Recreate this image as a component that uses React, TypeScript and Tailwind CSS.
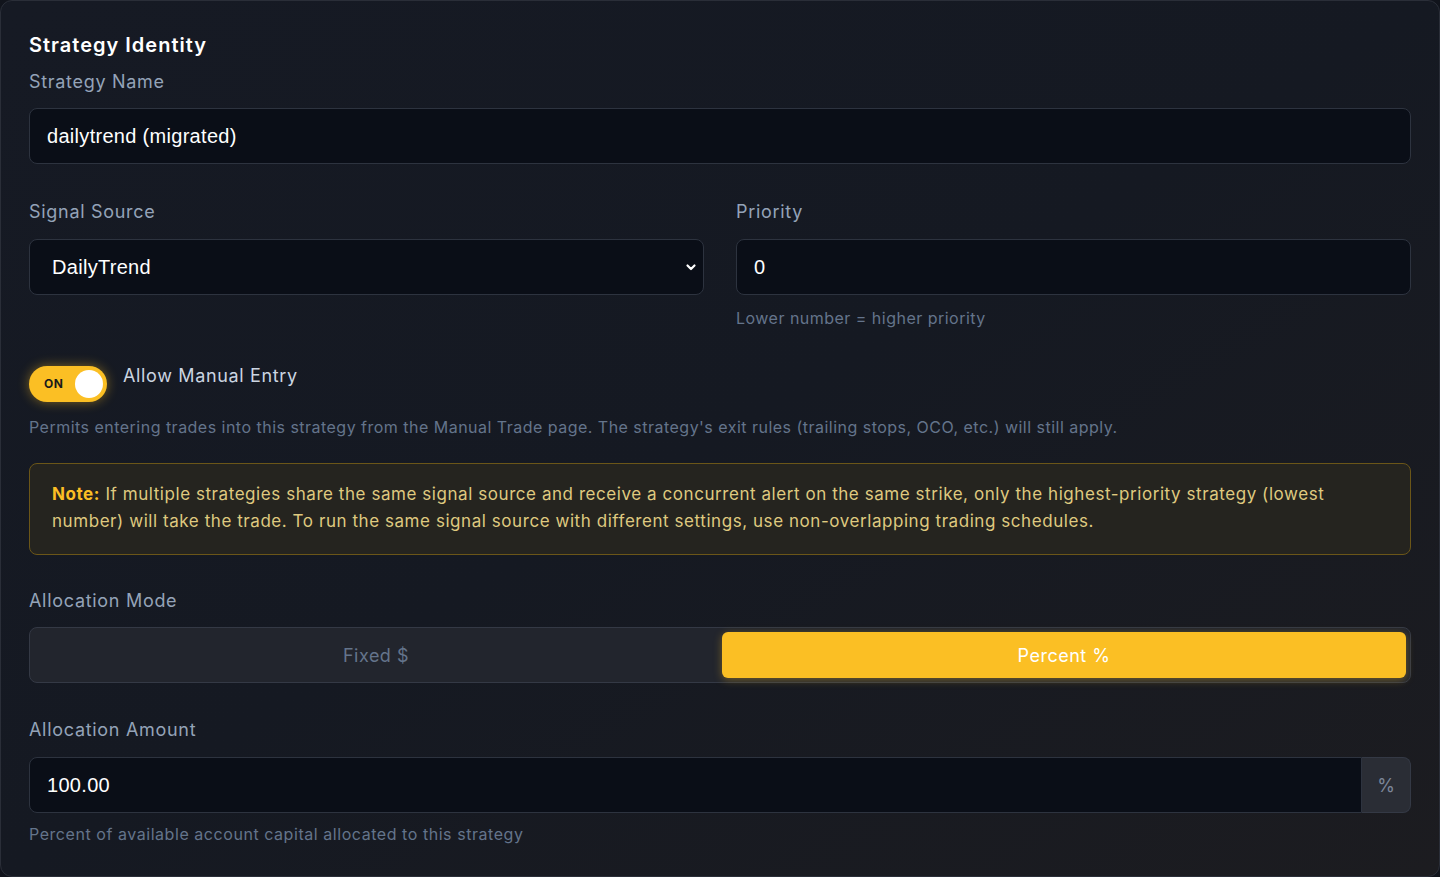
import React, { useState } from 'react';

const label = 'block text-[18px] tracking-[0.7px] text-[#94a3b8]';
const help = 'text-[16px] tracking-[0.48px] text-[#64748b]';
const inputBox =
  'w-full h-14 rounded-lg border border-[#2d333f] bg-[#0a0e17] text-[20px] tracking-[0.3px] text-white outline-none font-["Liberation_Sans",Arial,sans-serif]';

const App: React.FC = () => {
  const [mode, setMode] = useState<'fixed' | 'percent'>('percent');
  const [manual, setManual] = useState(true);

  return (
    <div className="min-h-[877px] w-[1440px] bg-[#11141c] font-['Inter',sans-serif]">
      <div className="h-[877px] rounded-xl border border-[#2a2e38] bg-gradient-to-br from-[#161a24] via-[#151922] to-[#1c1c20] px-7 pt-[30px] pb-7">
        <h2 className="text-[20px] leading-7 font-semibold tracking-[1px] text-white">Strategy Identity</h2>

        <label className={`${label} mt-[9px]`}>Strategy Name</label>
        <input className={`${inputBox} mt-[13px] px-[17px]`} defaultValue="dailytrend (migrated)" />

        <div className="mt-[34px] grid grid-cols-2 gap-8">
          <div>
            <label className={label}>Signal Source</label>
            <div className="relative mt-[14px]">
              <select className={`${inputBox} appearance-none px-[22px]`} defaultValue="DailyTrend">
                <option>DailyTrend</option>
                <option>WeeklyTrend</option>
              </select>
              <svg
                className="pointer-events-none absolute right-[7px] top-1/2 -translate-y-1/2"
                width="12"
                height="12"
                viewBox="0 0 12 12"
                fill="none"
              >
                <path d="M2.5 4.5l3.5 3.5 3.5-3.5" stroke="white" strokeWidth="2.2" strokeLinecap="round" strokeLinejoin="round" />
              </svg>
            </div>
          </div>
          <div>
            <label className={label}>Priority</label>
            <input className={`${inputBox} mt-[14px] px-[17px]`} defaultValue="0" />
            <p className={`${help} mt-[11px]`}>Lower number = higher priority</p>
          </div>
        </div>

        <div className="mt-[36px] flex items-start gap-4">
          <button
            onClick={() => setManual(!manual)}
            className="flex h-9 w-[78px] items-center justify-between rounded-full bg-[#fbbf24] pl-[15px] pr-1 shadow-[0_0_12px_rgba(251,191,36,0.45)]"
          >
            <span className="text-[12px] font-bold tracking-[0.5px] text-[#1a1a1a]">{manual ? 'ON' : 'OFF'}</span>
            <span className="h-7 w-7 rounded-full bg-white" />
          </button>
          <span className="text-[18px] leading-5 tracking-[0.65px] text-[#cbd5e1]">Allow Manual Entry</span>
        </div>
        <p className={`${help} mt-[13px]`}>
          Permits entering trades into this strategy from the Manual Trade page. The strategy's exit rules (trailing stops, OCO, etc.) will still apply.
        </p>

        <p className="mt-[24px] rounded-lg border border-[#6b5618] bg-[#25241f] px-[22px] pt-[17px] pb-[19px] text-[17px] leading-[27px] tracking-[0.56px] text-[#dfc97f]">
          <b className="font-bold text-[#fbbf24]">Note:</b> If multiple strategies share the same signal source and receive a concurrent alert on the same strike, only the highest-priority strategy (lowest number) will take the trade. To run the same signal source with different settings, use non-overlapping trading schedules.
        </p>

        <label className={`${label} mt-[32px]`}>Allocation Mode</label>
        <div className="mt-[13px] grid h-[56px] grid-cols-2 gap-1 rounded-lg border border-[#343945] bg-[#22252d] p-1">
          <button
            onClick={() => setMode('fixed')}
            className={`rounded-md text-[18px] tracking-[0.5px] ${mode === 'fixed' ? 'bg-[#fbbf24] text-white shadow-[0_2px_8px_rgba(251,191,36,0.35)]' : 'text-[#64748b]'}`}
          >
            Fixed $
          </button>
          <button
            onClick={() => setMode('percent')}
            className={`rounded-md text-[18px] tracking-[0.5px] ${mode === 'percent' ? 'bg-[#fbbf24] text-white shadow-[0_2px_8px_rgba(251,191,36,0.35)]' : 'text-[#64748b]'}`}
          >
            Percent %
          </button>
        </div>

        <label className={`${label} mt-[33px]`}>Allocation Amount</label>
        <div className="mt-[14px] flex">
          <input className={`${inputBox} rounded-r-none px-[17px]`} defaultValue="100.00" />
          <span className="flex h-14 w-[49px] shrink-0 items-center justify-center rounded-r-lg border border-l-0 border-[#343945] bg-[#2a2d35] text-[18px] text-[#7c8699]">
            %
          </span>
        </div>
        <p className={`${help} mt-[9px] tracking-[0.55px]`}>Percent of available account capital allocated to this strategy</p>
      </div>
    </div>
  );
};

export default App;
